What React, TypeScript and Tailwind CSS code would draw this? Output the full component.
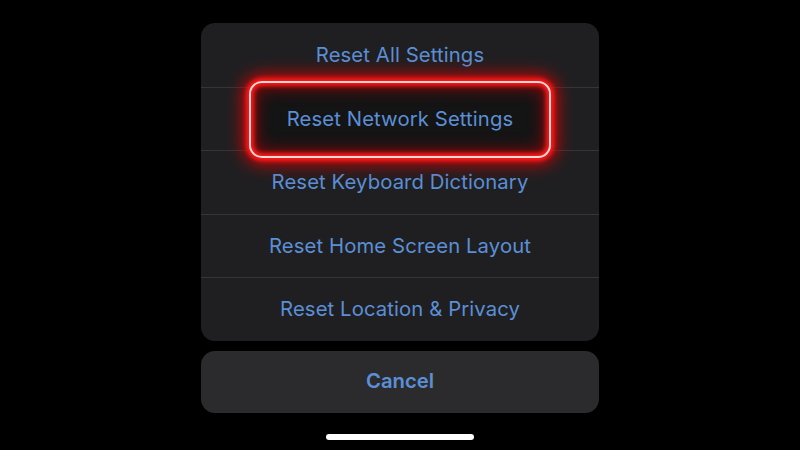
import React from "react";

const rows = [
  "Reset All Settings",
  "Reset Network Settings",
  "Reset Keyboard Dictionary",
  "Reset Home Screen Layout",
  "Reset Location & Privacy",
];

export default function App() {
  return (
    <div
      className="w-[800px] h-[450px] bg-black flex flex-col items-center pt-[23px] overflow-hidden"
      style={{ fontFamily: 'Inter, "Noto Sans", "Liberation Sans", sans-serif' }}
    >
      <div className="relative w-[398px] rounded-[14px] bg-[#1f1f21] flex flex-col">
        {rows.map((r, i) => (
          <div
            key={r}
            className={`h-[63.5px] flex items-center justify-center text-[20.3px] tracking-[0.1px] ${
              i === 1 ? "text-transparent" : "text-[#5b8fd6]"
            } ${i > 0 ? "border-t border-[#353537]" : ""}`}
          >
            {r}
          </div>
        ))}
        <div className="absolute left-[48px] top-[58px] w-[302px] h-[77px] rounded-[13px] border-[2px] border-[#ffd6d6] bg-[#141415] shadow-[0_0_4px_3px_#ff1a1a,0_0_16px_7px_rgba(230,0,0,0.8),inset_0_0_4px_3px_#ff1a1a,inset_0_0_16px_5px_rgba(200,0,0,0.65)] flex items-center justify-center text-[20.3px] tracking-[0.1px] text-[#5b8fd6]">
          Reset Network Settings
        </div>
      </div>
      <div className="mt-[10px] w-[398px] h-[62px] rounded-[14px] bg-[#2b2b2d] flex items-center justify-center text-[20.3px] font-semibold text-[#5b8fd6]">
        Cancel
      </div>
      <div className="mt-[21px] w-[148px] h-[6px] rounded-full bg-white" />
    </div>
  );
}
